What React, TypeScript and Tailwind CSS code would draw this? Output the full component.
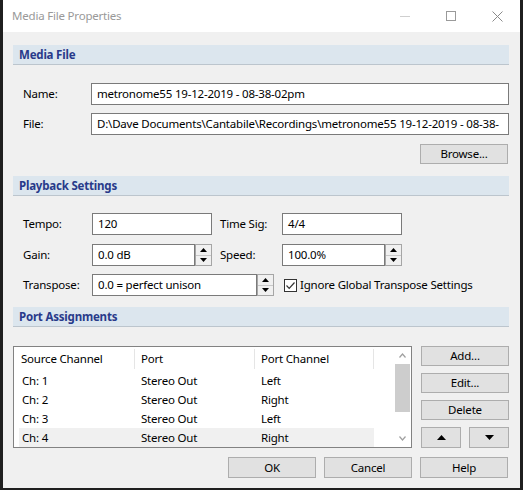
import React from 'react'

const SectionHeader = ({ title }: { title: string }) => (
  <div className="h-[20px] bg-[#dce6ee] border-b border-[#bcc5cd] pl-[6px] flex items-center">
    <span className="text-[11.5px] font-bold text-[#283a8a]">{title}</span>
  </div>
)

const Btn = ({ children, className = '' }: { children: React.ReactNode; className?: string }) => (
  <button className={`bg-[#e1e1e1] border border-[#adadad] text-[11.5px] text-black flex items-center justify-center ${className}`}>
    {children}
  </button>
)

const Spinner = () => (
  <div className="w-[17px] h-[22px] border border-[#a6a6a6] bg-[#f0f0f0] flex flex-col">
    <div className="flex-1 border-b border-[#c8c8c8] flex items-center justify-center">
      <svg width="7" height="4" viewBox="0 0 7 4"><path d="M3.5 0 L7 4 L0 4 Z" fill="#000" /></svg>
    </div>
    <div className="flex-1 flex items-center justify-center">
      <svg width="7" height="4" viewBox="0 0 7 4"><path d="M0 0 L7 0 L3.5 4 Z" fill="#000" /></svg>
    </div>
  </div>
)

const TextBox = ({ value, className = '' }: { value: string; className?: string }) => (
  <div className={`h-[22px] border border-[#7a7a7a] bg-white flex items-center pl-[5px] overflow-hidden whitespace-nowrap text-black ${className}`}>
    {value}
  </div>
)

const rows = [
  { ch: 'Ch: 1', port: 'Stereo Out', pc: 'Left' },
  { ch: 'Ch: 2', port: 'Stereo Out', pc: 'Right' },
  { ch: 'Ch: 3', port: 'Stereo Out', pc: 'Left' },
  { ch: 'Ch: 4', port: 'Stereo Out', pc: 'Right' }
]

export default function App() {
  return (
    <div className="w-[523px] h-[490px] bg-[#1f1f1f] font-['Noto_Sans',sans-serif] text-[11.5px] tracking-[-0.2px] text-black overflow-hidden">
      <div className="ml-[3px] w-[517px] h-[488px] bg-[#f0f0f0] flex flex-col">
        {/* Title bar */}
        <div className="h-[32px] bg-white flex items-center pl-[9px]">
          <span className="text-[11.5px] text-[#999999]">Media File Properties</span>
          <div className="ml-auto flex items-center h-full">
            <div className="w-[46px] h-full flex items-center justify-center">
              <div className="w-[10px] h-px bg-[#cfcfcf]" />
            </div>
            <div className="w-[46px] h-full flex items-center justify-center">
              <div className="w-[10px] h-[10px] border border-[#9a9a9a]" />
            </div>
            <div className="w-[46px] h-full flex items-center justify-center">
              <svg width="11" height="11" viewBox="0 0 11 11">
                <path d="M0.5 0.5 L10.5 10.5 M10.5 0.5 L0.5 10.5" stroke="#8a8a8a" strokeWidth="1" />
              </svg>
            </div>
          </div>
        </div>

        {/* Body */}
        <div className="flex flex-col pl-[10px] pr-[11px] pt-[13px]">
          <SectionHeader title="Media File" />
          <div className="mt-[18px] flex items-center">
            <span className="w-[78px] pl-[10px]">Name:</span>
            <TextBox value="metronome55 19-12-2019 - 08-38-02pm" className="flex-1" />
          </div>
          <div className="mt-[8px] flex items-center">
            <span className="w-[78px] pl-[10px]">File:</span>
            <TextBox value="D:\Dave Documents\Cantabile\Recordings\metronome55 19-12-2019 - 08-38-" className="flex-1" />
          </div>
          <div className="mt-[9px] flex justify-end pr-[1px]">
            <Btn className="w-[88px] h-[20px]">Browse...</Btn>
          </div>

          <div className="mt-[12px]">
            <SectionHeader title="Playback Settings" />
          </div>
          <div className="mt-[17px] flex items-center">
            <span className="w-[79px] pl-[10px]">Tempo:</span>
            <TextBox value="120" className="w-[120px]" />
            <span className="ml-[8px] w-[62px]">Time Sig:</span>
            <TextBox value="4/4" className="w-[120px]" />
          </div>
          <div className="mt-[9px] flex items-center">
            <span className="w-[79px] pl-[10px]">Gain:</span>
            <TextBox value="0.0 dB" className="w-[103px]" />
            <Spinner />
            <span className="ml-[8px] w-[62px]">Speed:</span>
            <TextBox value="100.0%" className="w-[103px]" />
            <Spinner />
          </div>
          <div className="mt-[8px] flex items-center">
            <span className="w-[79px] pl-[10px]">Transpose:</span>
            <TextBox value="0.0 = perfect unison" className="w-[165px]" />
            <Spinner />
            <div className="ml-[10px] w-[13px] h-[13px] border border-[#333333] bg-white flex items-center justify-center">
              <svg width="11" height="11" viewBox="0 0 11 11">
                <path d="M1.5 5.5 L4.2 8.3 L9.5 2.5" stroke="#333333" strokeWidth="1.2" fill="none" />
              </svg>
            </div>
            <span className="ml-[3px]">Ignore Global Transpose Settings</span>
          </div>

          <div className="mt-[11px]">
            <SectionHeader title="Port Assignments" />
          </div>
          <div className="mt-[19px] flex">
            {/* List */}
            <div className="w-[399px] h-[102px] border border-[#828282] bg-white flex">
              <div className="flex-1 flex flex-col pl-[5px]">
                <div className="h-[24px] flex">
                  <div className="w-[116px] pl-[2px] flex items-center border-r border-[#e5e5e5] my-[2px]">Source Channel</div>
                  <div className="w-[120px] pl-[6px] flex items-center border-r border-[#e5e5e5] my-[2px]">Port</div>
                  <div className="w-[119px] pl-[6px] flex items-center border-r border-[#e5e5e5] my-[2px]">Port Channel</div>
                </div>
                {rows.map((r, i) => (
                  <div key={r.ch} className={`h-[19px] w-[355px] flex items-center ${i === 3 ? 'bg-[#f0f0f0]' : ''}`}>
                    <div className="w-[116px] pl-[3px]">{r.ch}</div>
                    <div className="w-[120px] pl-[6px]">{r.port}</div>
                    <div className="w-[119px] pl-[6px]">{r.pc}</div>
                  </div>
                ))}
              </div>
              {/* Scrollbar */}
              <div className="w-[17px] flex flex-col items-center">
                <div className="h-[17px] flex items-center justify-center">
                  <svg width="7" height="5" viewBox="0 0 7 5"><path d="M0.5 4.5 L3.5 1 L6.5 4.5" stroke="#a0a0a0" strokeWidth="1.2" fill="none" /></svg>
                </div>
                <div className="w-[15px] h-[48px] bg-[#cdcdcd]" />
                <div className="flex-1" />
                <div className="h-[17px] flex items-center justify-center">
                  <svg width="7" height="5" viewBox="0 0 7 5"><path d="M0.5 0.5 L3.5 4 L6.5 0.5" stroke="#a0a0a0" strokeWidth="1.2" fill="none" /></svg>
                </div>
              </div>
            </div>

            {/* Side buttons */}
            <div className="ml-[9px] w-[88px] flex flex-col">
              <Btn className="h-[20px]">Add...</Btn>
              <Btn className="h-[20px] mt-[7px]">Edit...</Btn>
              <Btn className="h-[20px] mt-[7px]">Delete</Btn>
              <div className="mt-[7px] flex justify-between">
                <Btn className="w-[40px] h-[21px]">
                  <svg width="9" height="5" viewBox="0 0 9 5"><path d="M4.5 0 L9 5 L0 5 Z" fill="#000" /></svg>
                </Btn>
                <Btn className="w-[40px] h-[21px]">
                  <svg width="9" height="5" viewBox="0 0 9 5"><path d="M0 0 L9 0 L4.5 5 Z" fill="#000" /></svg>
                </Btn>
              </div>
            </div>
          </div>

          <div className="mt-[9px] flex justify-end gap-[8px] pr-[1px]">
            <Btn className="w-[88px] h-[21px]">OK</Btn>
            <Btn className="w-[88px] h-[21px]">Cancel</Btn>
            <Btn className="w-[88px] h-[21px]">Help</Btn>
          </div>
        </div>
      </div>
    </div>
  )
}
